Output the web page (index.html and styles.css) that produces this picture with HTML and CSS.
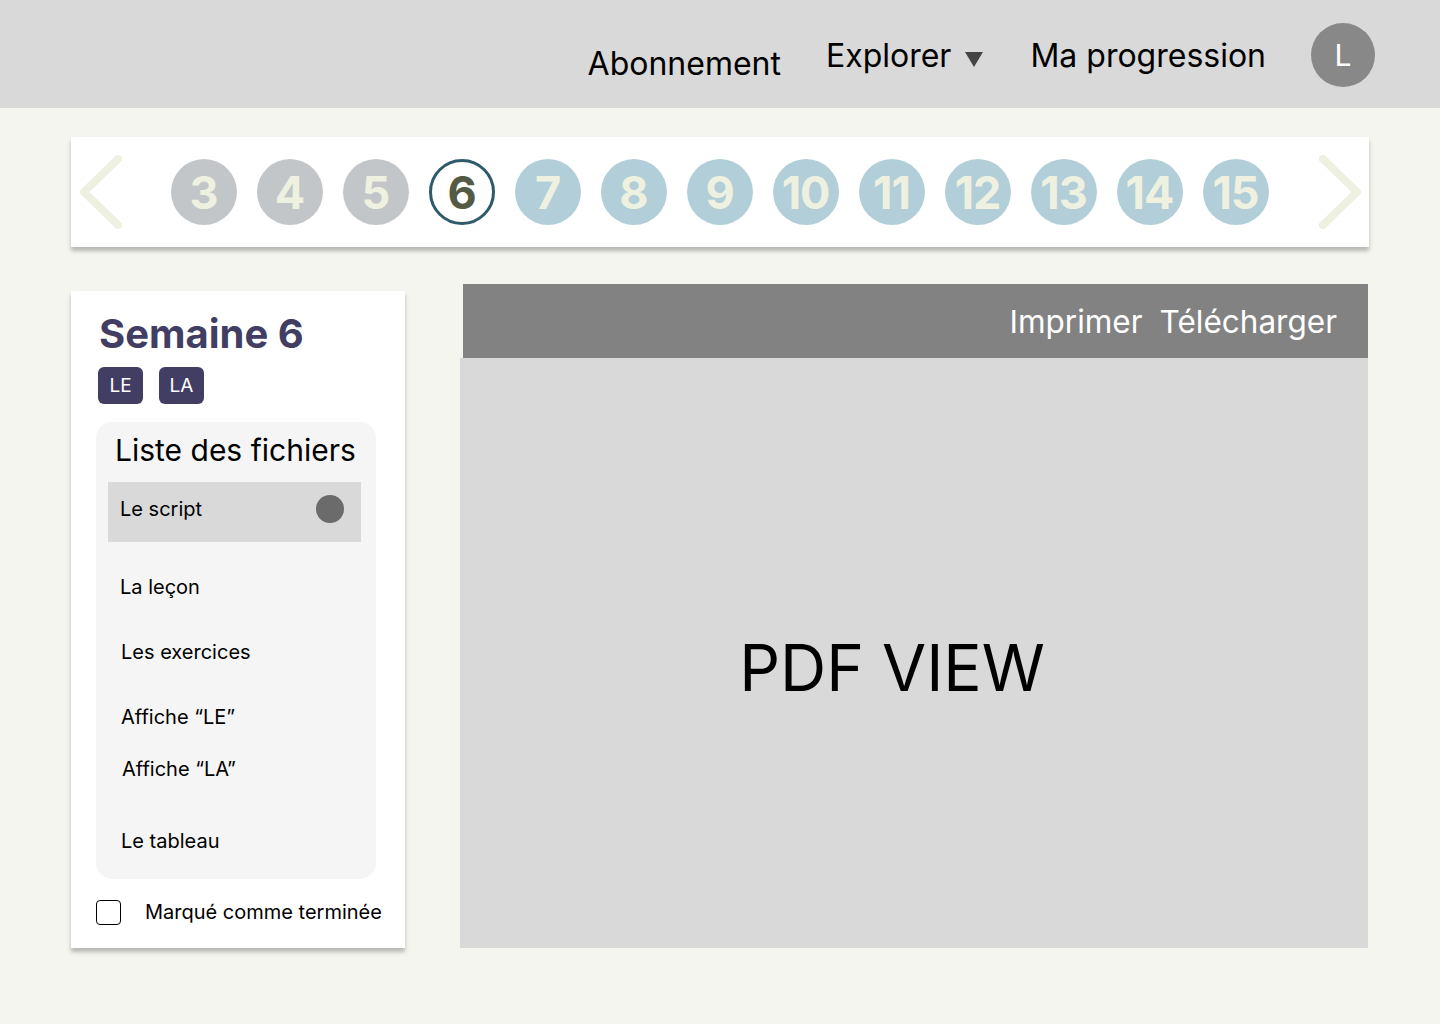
FILE: index.html
```html
<!DOCTYPE html>
<html lang="fr">
<head>
<meta charset="utf-8">
<title>Semaine 6</title>
<link rel="stylesheet" href="styles.css">
</head>
<body>
<header class="topbar">
  <nav class="nav">
    <a class="nav-link nav-link--low">Abonnement</a>
    <a class="nav-link">Explorer <span class="caret"></span></a>
    <a class="nav-link">Ma progression</a>
    <div class="avatar">L</div>
  </nav>
</header>

<section class="weeks">
  <svg class="chev" width="42" height="74" viewBox="0 0 42 74"><polyline points="38,4 4,37 38,70" fill="none" stroke="#eef1e0" stroke-width="8" stroke-linecap="round" stroke-linejoin="round"/></svg>
  <div class="week-list">
    <span class="week week--past">3</span>
    <span class="week week--past">4</span>
    <span class="week week--past">5</span>
    <span class="week week--current">6</span>
    <span class="week week--next">7</span>
    <span class="week week--next">8</span>
    <span class="week week--next">9</span>
    <span class="week week--next">10</span>
    <span class="week week--next">11</span>
    <span class="week week--next">12</span>
    <span class="week week--next">13</span>
    <span class="week week--next">14</span>
    <span class="week week--next">15</span>
  </div>
  <svg class="chev" width="42" height="74" viewBox="0 0 42 74"><polyline points="4,4 38,37 4,70" fill="none" stroke="#eef1e0" stroke-width="8" stroke-linecap="round" stroke-linejoin="round"/></svg>
</section>

<main class="content">
  <aside class="panel">
    <h1 class="title">Semaine 6</h1>
    <div class="tags">
      <span class="tag">LE</span>
      <span class="tag">LA</span>
    </div>
    <div class="files">
      <h2 class="files-title">Liste des fichiers</h2>
      <div class="file file--active">Le script <span class="dot"></span></div>
      <div class="file file--first">La leçon</div>
      <div class="file">Les exercices</div>
      <div class="file">Affiche “LE”</div>
      <div class="file file--tight">Affiche “LA”</div>
      <div class="file file--loose">Le tableau</div>
    </div>
    <label class="done">
      <span class="checkbox"></span>
      Marqué comme terminée
    </label>
  </aside>

  <section class="viewer">
    <div class="viewer-bar">
      <span>Imprimer</span>
      <span>Télécharger</span>
    </div>
    <div class="viewer-body">PDF VIEW</div>
  </section>
</main>
</body>
</html>
```

FILE: styles.css
```css
* { box-sizing: border-box; }
html, body { margin: 0; padding: 0; }
body {
  background: #f5f5ef;
  font-family: Inter, "Noto Sans", sans-serif;
  color: #000;
  width: 1440px;
  height: 1024px;
  overflow: hidden;
}

.topbar {
  height: 108px;
  background: #d9d9d9;
  display: flex;
  justify-content: flex-end;
  padding-right: 65px;
}
.nav {
  display: flex;
  align-items: flex-start;
  gap: 47px;
}
.nav-link {
  font-size: 32px;
  line-height: 40px;
  margin-top: 36px;
  color: #000;
  display: flex;
  align-items: center;
}
.nav-link--low { margin-top: 44px; margin-right: -2px; }
.caret {
  width: 0; height: 0;
  border-left: 9.5px solid transparent;
  border-right: 9.5px solid transparent;
  border-top: 15px solid #444;
  margin-left: 14px;
  margin-top: 6px;
}
.avatar {
  width: 64px; height: 64px;
  border-radius: 50%;
  background: #888;
  color: #fff;
  font-size: 30px;
  display: flex;
  align-items: center;
  justify-content: center;
  margin-top: 23px;
  margin-left: -2px;
}

.weeks {
  margin: 29px 0 0 71px;
  width: 1298px;
  height: 110px;
  background: #fff;
  box-shadow: 0 4px 4px rgba(0,0,0,0.25);
  display: flex;
  align-items: center;
  justify-content: space-between;
  padding: 0 8px 0 9px;
}
.week-list { display: flex; gap: 20px; margin-left: -2px; }
.week {
  width: 66px; height: 66px;
  border-radius: 50%;
  display: flex;
  align-items: center;
  justify-content: center;
  font-weight: 700;
  font-size: 45px;
  color: #eff1e0;
  letter-spacing: -1px;
}
.week--past { background: #c3c6c9; }
.week--next { background: #b2ced8; }
.week--current {
  background: #fff;
  border: 3px solid #2f5a6b;
  color: #555a45;
}

.content {
  display: flex;
  align-items: flex-end;
  gap: 55px;
  padding-left: 71px;
  margin-top: 37px;
}
.panel {
  width: 334px;
  height: 657px;
  background: #fff;
  box-shadow: 0 4px 4px rgba(0,0,0,0.25);
  padding: 19px 29px 0 25px;
}
.title {
  margin: 0 0 0 3px;
  font-size: 40px;
  line-height: 48px;
  font-weight: 700;
  color: #413d63;
}
.tags { display: flex; gap: 16px; margin-top: 9px; margin-left: 2px; }
.tag {
  width: 45px; height: 37px;
  border-radius: 6px;
  background: #413d63;
  color: #fff;
  font-size: 19px;
  display: flex;
  align-items: center;
  justify-content: center;
}
.files {
  margin-top: 18px;
  height: 457px;
  background: #f5f5f5;
  border-radius: 16px;
  padding: 10px 15px 0 12px;
}
.files-title {
  margin: 0 0 14px 7px;
  font-size: 30px;
  line-height: 36px;
  font-weight: 400;
}
.file {
  font-size: 20px;
  line-height: 24px;
  padding-left: 13px;
  margin-top: 41px;
}
.file--active {
  margin-top: 0;
  height: 60px;
  background: #d9d9d9;
  display: flex;
  align-items: center;
  justify-content: space-between;
  padding: 0 17px 6px 12px;
}
.dot {
  width: 28px; height: 28px;
  border-radius: 50%;
  background: #6b6b6b;
}
.file--first { margin-top: 33px; padding-left: 12px; }
.file--tight { margin-top: 28px; padding-left: 14px; }
.file--loose { margin-top: 48px; }

.done {
  display: flex;
  align-items: center;
  gap: 24px;
  margin-top: 21px;
  font-size: 20px;
  line-height: 25px;
  white-space: nowrap;
}
.checkbox {
  flex: none;
  width: 25px; height: 25px;
  border: 1.5px solid #000;
  border-radius: 4px;
  background: #fff;
}

.viewer {
  width: 908px;
  height: 664px;
  display: flex;
  flex-direction: column;
}
.viewer-bar {
  height: 74px;
  margin-left: 3px;
  background: #828282;
  color: #fff;
  font-size: 31.5px;
  display: flex;
  justify-content: flex-end;
  align-items: center;
  gap: 17px;
  padding-right: 31px;
}
.viewer-body {
  flex: 1;
  background: #d9d9d9;
  display: flex;
  align-items: center;
  justify-content: center;
  font-size: 64px;
  padding-top: 28px;
  padding-right: 44px;
}
```
